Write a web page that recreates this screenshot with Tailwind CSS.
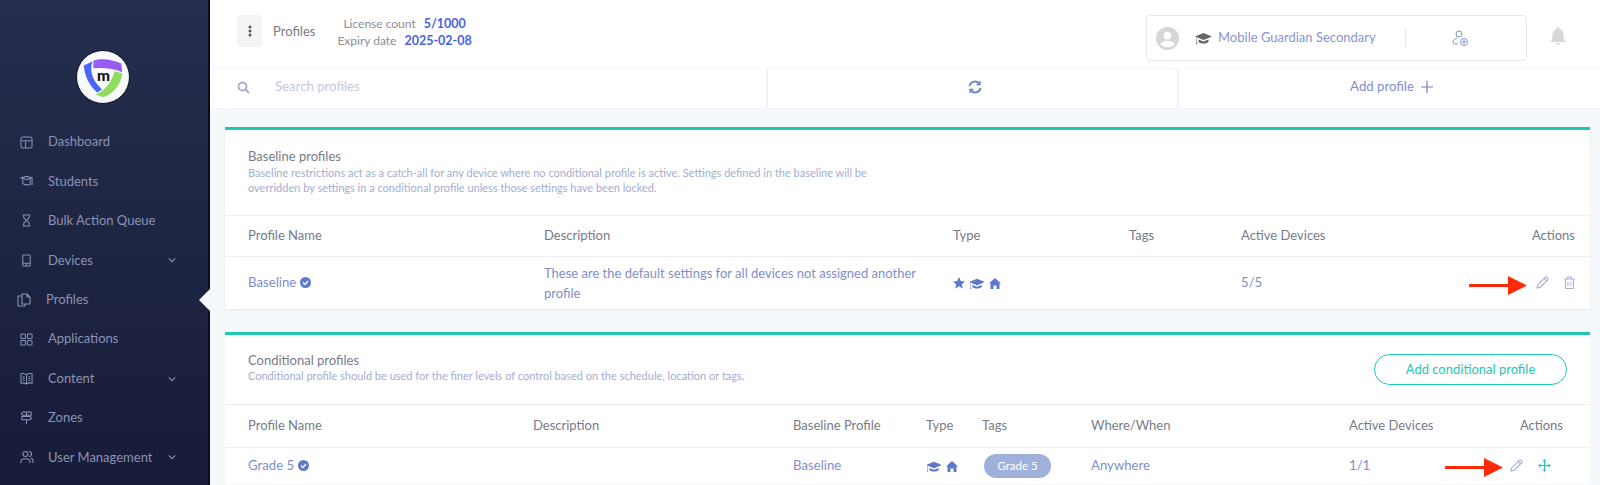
<!DOCTYPE html>
<html lang="en">
<head>
    <meta charset="UTF-8">
    <meta name="viewport" content="width=device-width, initial-scale=1.0">
    <title>Profiles</title>
    <script src="https://cdn.jsdelivr.net/npm/@tailwindcss/browser@4"></script>
</head>
<body class="relative h-[485px] w-[1600px] overflow-hidden bg-[#f5f9fc] font-['Lato','Noto_Sans',sans-serif] text-[13px] text-[#7f8fc9]">
<div class="flex h-[485px]">
    <!-- Sidebar -->
    <aside class="relative h-full w-[210px] shrink-0 border-r-2 border-[#0a0d1f] bg-gradient-to-b from-[#252e4d] to-[#171c38] text-[13px] text-[#8a93b5]">
        <div class="flex justify-center pr-[3px] pt-[50px]">
            <div class="h-[54px] w-[54px] rounded-full border border-[#0a0d1f] bg-[#f8f9fd]">
                <svg width="52" height="52" viewBox="0 0 54 54">
                    <path d="M17 10C26 7 37 9 46 13L47 22C38 18 27 17 17 18z" fill="#9a5cf0"/>
                    <path d="M7 15L16 11C13 20 15 30 26 40L21 43C13 36 8 26 7 15z" fill="#4a66fa"/>
                    <path d="M47 23C46 35 37 45 27 48L19 45C28 42 36 33 39 21z" fill="#8fdc5f"/>
                    <text x="27.500" y="31" text-anchor="middle" font-size="16" font-weight="900" fill="#111" font-family="Lato">m</text>
                </svg>
            </div>
        </div>
        <nav class="mt-[18.5px]">
            <a class="flex h-[39.4px] items-center pl-[20px] pr-[32px]">
                <svg class="mr-[15px] h-[13px] w-[13px]" viewBox="0 0 14 14" fill="none" stroke="currentColor" stroke-width="1.1"><rect x="1" y="1" width="12" height="12" rx="2"/><path d="M1 5h12M6 5v8"/></svg>
                Dashboard
            </a>
            <a class="flex h-[39.4px] items-center pl-[20px] pr-[32px]">
                <svg class="mr-[15px] h-[13px] w-[13px]" viewBox="0 0 14 14" fill="none" stroke="currentColor" stroke-width="1.1"><path d="M1 3l6-1.500 6 1.500-6 2zM3 4.500V9c2 2 6 2 8 1V4.500M13 3v8"/></svg>
                Students
            </a>
            <a class="flex h-[39.4px] items-center pl-[20px] pr-[32px]">
                <svg class="mr-[15px] h-[13px] w-[13px]" viewBox="0 0 14 14" fill="none" stroke="currentColor" stroke-width="1.1"><path d="M3 1h8M3 13h8M4 1v3l3 3 3-3V1M4 13v-3l3-3 3 3v3"/></svg>
                Bulk Action Queue
            </a>
            <a class="flex h-[39.4px] items-center pl-[20px] pr-[32px]">
                <svg class="mr-[15px] h-[13px] w-[13px]" viewBox="0 0 14 14" fill="none" stroke="currentColor" stroke-width="1.1"><rect x="3" y="1" width="8" height="12" rx="1"/><path d="M3 10h8M7 10v3"/></svg>
                Devices
                <svg class="ml-auto h-[8px] w-[8px]" viewBox="0 0 10 10" fill="none" stroke="currentColor" stroke-width="1.4"><path d="M1 3l4 4 4-4"/></svg>
            </a>
            <a class="relative flex h-[39.4px] items-center pl-[17px] pr-[32px]">
                <svg class="mr-[15px] h-[14px] w-[14px]" viewBox="0 0 14 14" fill="none" stroke="currentColor" stroke-width="1.1"><path d="M5 3H1v10h7v-2"/><path d="M5 1h5l3 3v7H5zM10 1v3h3"/></svg>
                Profiles
                <span class="absolute right-[-2px] top-[9px] h-0 w-0 border-y-[11px] border-r-[11px] border-y-transparent border-r-[#f5f9fc]"></span>
            </a>
            <a class="flex h-[39.4px] items-center pl-[20px] pr-[32px]">
                <svg class="mr-[15px] h-[13px] w-[13px]" viewBox="0 0 14 14" fill="none" stroke="currentColor" stroke-width="1.1"><rect x="1" y="1" width="5" height="5" rx="1"/><rect x="8" y="1" width="5" height="5" rx="1"/><rect x="1" y="8" width="5" height="5" rx="1"/><rect x="8" y="8" width="5" height="5" rx="1"/></svg>
                Applications
            </a>
            <a class="flex h-[39.4px] items-center pl-[20px] pr-[32px]">
                <svg class="mr-[15px] h-[13px] w-[13px]" viewBox="0 0 14 14" fill="none" stroke="currentColor" stroke-width="1.1"><path d="M7 3C5 1.500 3 1.500 1 2v10c2-.5 4-.5 6 1 2-1.500 4-1.500 6-1V2c-2-.5-4-.5-6 1zM7 3v10M3 5h2M3 7h2M3 9h2M9 5h2M9 7h2M9 9h2"/></svg>
                Content
                <svg class="ml-auto h-[8px] w-[8px]" viewBox="0 0 10 10" fill="none" stroke="currentColor" stroke-width="1.4"><path d="M1 3l4 4 4-4"/></svg>
            </a>
            <a class="flex h-[39.4px] items-center pl-[20px] pr-[32px]">
                <svg class="mr-[15px] h-[13px] w-[13px]" viewBox="0 0 14 14" fill="none" stroke="currentColor" stroke-width="1.1"><path d="M3 1h9v3.500H3L1.500 2.750zM11 6H2v3.500h9l1.500-1.750zM7 9.500V14M7 1v5"/></svg>
                Zones
            </a>
            <a class="flex h-[39.4px] items-center pl-[20px] pr-[32px]">
                <svg class="mr-[14px] h-[14px] w-[14px]" viewBox="0 0 14 14" fill="none" stroke="currentColor" stroke-width="1.1"><circle cx="5.500" cy="4" r="2.500"/><path d="M1 13v-2c0-3 9-3 9 0v2M9 1.500a2.500 2.500 0 010 5M11 8c1.500.5 2 1.500 2 3v2"/></svg>
                User Management
                <svg class="ml-auto h-[8px] w-[8px]" viewBox="0 0 10 10" fill="none" stroke="currentColor" stroke-width="1.4"><path d="M1 3l4 4 4-4"/></svg>
            </a>
        </nav>
    </aside>

    <main class="min-w-0 flex-1">
        <!-- Top bar -->
        <header class="flex h-[68px] items-start bg-white pl-[27px] pr-[34px] pt-[15px]">
            <div class="flex h-[32px] w-[25px] items-center justify-center rounded-sm bg-[#f4f4f4]">
                <svg width="4" height="12" viewBox="0 0 4 12" fill="#555"><circle cx="2" cy="2" r="1.500"/><circle cx="2" cy="6" r="1.500"/><circle cx="2" cy="10" r="1.500"/></svg>
            </div>
            <span class="ml-[11px] mt-[7px] text-[13px] text-[#777b85]">Profiles</span>
            <div class="ml-[22px] flex flex-col items-center text-[12px] leading-[17px] text-[#8a8e98]">
                <div class="flex gap-[8px]"><span>License count</span><span class="text-[12.5px] font-bold text-[#4a5fe8]">5/1000</span></div>
                <div class="flex gap-[8px]"><span>Expiry date</span><span class="text-[12.5px] font-bold text-[#4a5fe8]">2025-02-08</span></div>
            </div>
            <div class="ml-auto flex h-[46px] w-[381px] items-center rounded border border-[#e4e6f4] pl-[9px]">
                <svg width="23" height="23" viewBox="0 0 24 24"><circle cx="12" cy="12" r="12" fill="#d6d6d6"/><circle cx="12" cy="9" r="4" fill="#fff"/><path d="M4.500 18c2-5 13-5 15 0-3.500 4-11.500 4-15 0z" fill="#fff"/></svg>
                <svg class="ml-[16px]" width="17" height="14" viewBox="0 0 17 14" fill="#666"><path d="M8.500 2L0 5.500 8.500 9 17 5.500z"/><path d="M3.500 8.500v2.500c3 2 7 2 10 0V8.500L8.500 10.500zM1.500 6.500v5L1 13h1.500L2 11.500v-5z"/></svg>
                <span class="ml-[6px] text-[13px] text-[#8796d0]">Mobile Guardian Secondary</span>
                <span class="ml-[29px] h-[18px] w-px bg-[#e4e6f4]"></span>
                <svg class="ml-[46px]" width="17" height="17" viewBox="0 0 17 17" fill="none" stroke="#7f8fc9" stroke-width="1"><circle cx="7" cy="4" r="3"/><path d="M5 8c-2 1-4 2-4 4s2 2 5 2"/><circle cx="12" cy="12" r="3.500"/><circle cx="12" cy="12" r="1.200"/></svg>
            </div>
            <svg class="ml-[23px] mt-[12px]" width="16" height="20" viewBox="0 0 16 20" fill="#d8d8d8"><path d="M8 0a1.500 1.500 0 011.500 2C12 3 13.500 5 13.500 8c0 3 .5 5 2.500 7H0c2-2 2.500-4 2.500-7 0-3 1.500-5 4-6A1.500 1.500 0 018 0zM6 16h4a2 2 0 01-4 0z"/></svg>
        </header>

        <!-- Toolbar -->
        <div class="flex h-[41px] items-center border-y border-[#f3f5fa] bg-white text-[13.2px]">
            <div class="flex h-full w-[558px] items-center border-r-2 border-[#f0f2f8] pb-[3px] pl-[27px]">
                <svg width="13" height="13" viewBox="0 0 13 13" fill="none" stroke="#a3acd0" stroke-width="1.800"><circle cx="5.500" cy="5.500" r="4"/><path d="M8.500 8.500L12 12"/></svg>
                <span class="ml-[25px] text-[#c3c8de]">Search profiles</span>
            </div>
            <div class="flex h-full w-[411px] items-center justify-center border-r-2 border-[#f0f2f8] pb-[3px] pl-[5px]">
                <svg width="14" height="14" viewBox="0 0 14 14" fill="none" stroke="#6f82c6" stroke-width="1.800"><path d="M1.500 6A5.500 5.500 0 0111.500 4M12.500 8A5.500 5.500 0 012.500 10"/><path d="M12 1v3.500H8.500M2 13V9.500h3.500" stroke-width="1.400"/></svg>
            </div>
            <div class="flex flex-1 items-center justify-center gap-[7px] pb-[3px] pl-[4px]">
                Add profile
                <svg width="12" height="12" viewBox="0 0 12 12" stroke="#6f82c6" stroke-width="1.200"><path d="M6 0v12M0 6h12"/></svg>
            </div>
        </div>

        <div class="pl-[15px] pr-[10px] pt-[18px]">
            <!-- Baseline profiles -->
            <section class="border-t-[3px] border-[#1fc8b4] bg-white shadow-[0_1px_2px_rgba(120,130,170,0.15)]">
                <div class="h-[85px] pl-[23px] pt-[18px]">
                    <h2 class="text-[13px] leading-[17px] text-[#777b88]">Baseline profiles</h2>
                    <p class="w-[650px] text-[11px] leading-[15px] text-[#a4add2]">Baseline restrictions act as a catch-all for any device where no conditional profile is active. Settings defined in the baseline will be overridden by settings in a conditional profile unless those settings have been locked.</p>
                </div>
                <div class="grid h-[42px] grid-cols-[296px_409px_176px_112px_1fr] items-center border-y border-[#eceef6] pl-[23px] pr-[15px] text-[13px] text-[#777b88]">
                    <span>Profile Name</span><span>Description</span><span>Type</span><span>Tags</span>
                    <div class="flex justify-between"><span>Active Devices</span><span>Actions</span></div>
                </div>
                <div class="grid h-[52px] grid-cols-[296px_409px_176px_112px_1fr] items-center pl-[23px] pr-[15px] text-[13.2px]">
                    <span class="flex items-center gap-[4px]">Baseline
                        <svg width="11" height="11" viewBox="0 0 11 11"><circle cx="5.500" cy="5.500" r="5.500" fill="#5f78c9"/><path d="M3 5.500l2 2 3-3.500" fill="none" stroke="#fff" stroke-width="1.300"/></svg>
                    </span>
                    <span class="w-[395px] text-[13px] leading-[20px]">These are the default settings for all devices not assigned another profile</span>
                    <span class="flex items-center gap-[4px]">
                        <svg width="12" height="12" viewBox="0 0 12 12" fill="#5f78c9"><path d="M6 0l1.800 4 4.200.4-3.200 2.800 1 4.300L6 9.200 2.200 11.500l1-4.300L0 4.400 4.200 4z"/></svg>
                        <svg width="16" height="13" viewBox="0 0 17 14" fill="#5f78c9"><path d="M8.500 2L0 5.500 8.500 9 17 5.500z"/><path d="M3.500 8.500v2.500c3 2 7 2 10 0V8.500L8.500 10.500zM1.500 6.500v5L1 13h1.500L2 11.500v-5z"/></svg>
                        <svg width="12" height="11" viewBox="0 0 12 11" fill="#5f78c9"><path d="M6 0L0 5.500h1.500V11h3V7.500h3V11h3V5.500H12z"/></svg>
                    </span>
                    <span></span>
                    <div class="flex items-center">
                        <span>5/5</span>
                        <div class="ml-auto flex items-center gap-[15px]">
                            <svg width="13" height="13" viewBox="0 0 12 12" fill="none" stroke="#a3aed6"><path d="M1 11l.7-3L8.500 1.200a1 1 0 011.400 0l.9.9a1 1 0 010 1.400L4 10.300zM7.500 2.200l2.300 2.300"/></svg>
                            <svg width="11" height="13" viewBox="0 0 11 13" fill="none" stroke="#a3aed6"><path d="M0 3h11M3.500 3V1h4v2M1.500 3v9.500h8V3M4 5.500v4.500M7 5.500v4.500"/></svg>
                        </div>
                    </div>
                </div>
            </section>
            <!-- Conditional profiles -->
            <section class="mt-[23px] border-t-[3px] border-[#1fc8b4] bg-white">
                <div class="flex h-[69px] items-start pl-[23px] pr-[23px] pt-[17px]">
                    <div>
                        <h2 class="text-[13px] leading-[17px] text-[#777b88]">Conditional profiles</h2>
                        <p class="text-[11px] leading-[13px] text-[#a4add2]">Conditional profile should be used for the finer levels of control based on the schedule, location or tags.</p>
                    </div>
                    <button class="ml-auto mt-[2px] flex h-[31px] w-[193px] items-center justify-center rounded-full border border-[#1fc8b4] text-[13px] text-[#1fc8b4]">Add conditional profile</button>
                </div>
                <div class="grid h-[44px] grid-cols-[285px_260px_133px_56px_109px_258px_1fr] items-center border-y border-[#eceef6] pl-[23px] pr-[27px] text-[13px] text-[#777b88]">
                    <span>Profile Name</span><span>Description</span><span>Baseline Profile</span><span>Type</span><span>Tags</span><span>Where/When</span>
                    <div class="flex justify-between"><span>Active Devices</span><span>Actions</span></div>
                </div>
                <div class="grid h-[36px] grid-cols-[285px_260px_133px_56px_109px_258px_1fr] items-center pl-[23px] pr-[27px] text-[13.2px]">
                    <span class="flex items-center gap-[4px]">Grade 5
                        <svg width="11" height="11" viewBox="0 0 11 11"><circle cx="5.500" cy="5.500" r="5.500" fill="#5f78c9"/><path d="M3 5.500l2 2 3-3.500" fill="none" stroke="#fff" stroke-width="1.300"/></svg>
                    </span>
                    <span></span>
                    <span>Baseline</span>
                    <span class="flex items-center gap-[4px]">
                        <svg width="16" height="13" viewBox="0 0 17 14" fill="#5f78c9"><path d="M8.500 2L0 5.500 8.500 9 17 5.500z"/><path d="M3.500 8.500v2.500c3 2 7 2 10 0V8.500L8.500 10.500zM1.500 6.500v5L1 13h1.500L2 11.500v-5z"/></svg>
                        <svg width="12" height="11" viewBox="0 0 12 11" fill="#5f78c9"><path d="M6 0L0 5.500h1.500V11h3V7.500h3V11h3V5.500H12z"/></svg>
                    </span>
                    <span><span class="ml-[2px] inline-flex h-[24px] w-[67px] items-center justify-center rounded-full bg-[#9fb1da] text-[11.5px] text-white">Grade 5</span></span>
                    <span>Anywhere</span>
                    <div class="flex items-center">
                        <span>1/1</span>
                        <div class="ml-auto flex items-center gap-[15px] pr-[12px]">
                            <svg width="13" height="13" viewBox="0 0 12 12" fill="none" stroke="#a3aed6"><path d="M1 11l.7-3L8.500 1.200a1 1 0 011.400 0l.9.9a1 1 0 010 1.400L4 10.300zM7.500 2.200l2.300 2.300"/></svg>
                            <svg width="13" height="13" viewBox="0 0 13 13" fill="#1fc8b4"><path d="M6.500 0L8.500 2.500h-1.500v3.500h3.500V4.500L13 6.500l-2.500 2V7H7v3.500h1.500l-2 2.500-2-2.500H6V7H2.500v1.500L0 6.500l2.500-2V6H6V2.500H4.500z"/></svg>
                        </div>
                    </div>
                </div>
            </section>
        </div>
    </main>
</div>

<!-- Annotation arrows -->
<svg class="absolute left-[1469px] top-[276px]" width="58" height="19" viewBox="0 0 58 19"><path d="M0 8h39V0l19 9.500L39 19v-8H0z" fill="#ff2a0a"/></svg>
<svg class="absolute left-[1445px] top-[458px]" width="58" height="19" viewBox="0 0 58 19"><path d="M0 8h39V0l19 9.500L39 19v-8H0z" fill="#ff2a0a"/></svg>
</body>
</html>
